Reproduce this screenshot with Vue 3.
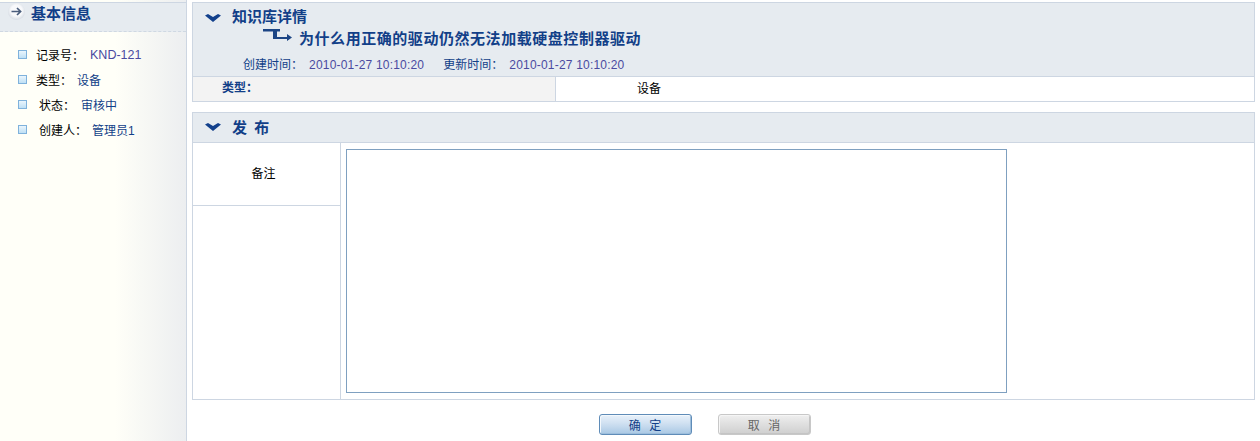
<script setup>
const infos = [
  { label: '记录号：', value: 'KND-121', cls: 'purple', indent: false },
  { label: '类型：', value: '设备', cls: '', indent: false },
  { label: '状态：', value: '审核中', cls: 'v3', indent: true },
  { label: '创建人：', value: '管理员1', cls: 'v4', indent: true },
]
</script>

<template>
  <div class="page">
    <aside class="side">
      <div class="side-head">
        <svg class="arrow-ball" width="17" height="17" viewBox="0 0 17 17">
          <defs>
            <radialGradient id="ball" cx="0.5" cy="0.45" r="0.55">
              <stop offset="0.6" stop-color="#f8f9fb" />
              <stop offset="1" stop-color="#d5dbe3" />
            </radialGradient>
          </defs>
          <circle cx="8.5" cy="8.5" r="8.5" fill="url(#ball)" />
          <path d="M3.5 8.5h9M9 5l3.6 3.5L9 12" fill="none" stroke="#4a5d7c" stroke-width="1.7" />
        </svg>
        <span class="side-title">基本信息</span>
      </div>
      <ul class="info-list">
        <li v-for="i in infos" :key="i.label" class="info">
          <span class="bullet"></span>
          <span class="info-label" :class="{ indent: i.indent }">{{ i.label }}</span>
          <span class="info-value" :class="i.cls">{{ i.value }}</span>
        </li>
      </ul>
    </aside>

    <main class="main">
      <section class="panel">
        <div class="head head-tall">
          <div class="head-line">
            <svg class="chev chev-low" width="16" height="8" viewBox="0 0 16 8"><path d="M0 1.5L3 0l5 3 5-3 3 1.5L8 8z" fill="#12408c" /></svg>
            <span class="head-title">知识库详情</span>
          </div>
          <div class="subject">
            <svg class="subject-icon" width="29" height="13" viewBox="0 0 29 13"><path d="M0 0h17v2.5h-3V8h10V5l5 3.5L24 12v-2H10V2.5H0z" fill="#1c4585" /></svg>
            <span class="subject-text">为什么用正确的驱动仍然无法加载硬盘控制器驱动</span>
          </div>
          <div class="times">
            <span class="t-label">创建时间：</span><span class="t-value">2010-01-27 10:10:20</span>
            <span class="t-label second">更新时间：</span><span class="t-value">2010-01-27 10:10:20</span>
          </div>
        </div>
        <div class="type-row">
          <div class="type-label">类型：</div>
          <div class="type-value">设备</div>
        </div>
      </section>

      <section class="panel publish">
        <div class="head head-short">
          <svg class="chev" width="16" height="8" viewBox="0 0 16 8"><path d="M0 1.5L3 0l5 3 5-3 3 1.5L8 8z" fill="#12408c" /></svg>
          <span class="head-title spaced">发 布</span>
        </div>
        <div class="form">
          <div class="form-left"><div class="note-label">备注</div></div>
          <div class="form-right"><textarea class="note"></textarea></div>
        </div>
      </section>

      <div class="actions">
        <button class="btn ok">确 定</button>
        <button class="btn cancel">取 消</button>
      </div>
    </main>
  </div>
</template>

<style>
html, body { margin: 0; background: #fff; }
</style>

<style scoped>
.page {
  display: flex;
  width: 1260px;
  height: 441px;
  overflow: hidden;
  font: 12px "Liberation Sans", "Noto Sans CJK SC", sans-serif;
  color: #000;
  box-sizing: border-box;
}
.side {
  width: 187px;
  flex: none;
  box-sizing: border-box;
  border-right: 1px solid #cdd6e2;
  background: linear-gradient(90deg, #fffff8 0, #fffff8 62%, #eceef0 100%);
  padding-top: 2px;
}
.side-head {
  height: 30px;
  box-sizing: border-box;
  background: #e6ebf0;
  border-top: 1px solid #cdd6e2;
  border-bottom: 1px dashed #cfd8e2;
  display: flex;
  align-items: flex-start;
  padding: 0 0 0 8px;
}
.arrow-ball { flex: none; }
.side-title {
  margin: 1px 0 0 6px;
  font-size: 15px;
  font-weight: 700;
  line-height: 20px;
  color: #123f88;
}
.info-list {
  list-style: none;
  margin: 0;
  padding: 10px 0 0 18px;
}
.info {
  display: flex;
  align-items: center;
  height: 25px;
}
.bullet {
  width: 7px;
  height: 7px;
  flex: none;
  border: 1px solid #7fb2dc;
  background: linear-gradient(#eaf5fc, #bfe0f5);
}
.info-label { margin-left: 9px; }
.info-label.indent { margin-left: 12px; }
.info-value { margin-left: 5px; color: #123f88; }
.info-value.purple { color: #4a4aa0; margin-left: 6px; font-size: 12.5px; }
.info-value.v3 { margin-left: 6px; }
.info-value.v4 { margin-left: 5px; }

.main {
  width: 1063px;
  margin-left: 5px;
  padding-top: 2px;
  flex: none;
}
.panel {
  border: 1px solid #cdd6e2;
  box-sizing: border-box;
}
.head {
  background: #e6ebf0;
  border-bottom: 1px solid #cdd6e2;
  box-sizing: border-box;
}
.head-tall { height: 74px; padding: 0 0 0 12px; }
.head-line {
  display: flex;
  align-items: center;
  height: 25px;
}
.chev { flex: none; }
.chev-low { margin-top: 5px; }
.head-title {
  margin-left: 11px;
  font-size: 15px;
  font-weight: 700;
  color: #123f88;
}
.head-title.spaced { letter-spacing: 1px; word-spacing: 1px; }
.subject {
  display: flex;
  align-items: center;
  height: 18px;
  padding-left: 58px;
}
.subject-icon { flex: none; margin-top: -3px; }
.subject-text {
  margin-left: 7px;
  font-size: 15px;
  letter-spacing: 0.55px;
  font-weight: 700;
  color: #123f88;
  white-space: nowrap;
}
.times {
  margin-top: 9px;
  padding-left: 38px;
  height: 20px;
  line-height: 20px;
  white-space: nowrap;
}
.t-label { color: #123f88; }
.t-label.second { margin-left: 19px; }
.t-value { color: #4a4aa0; margin-left: 6px; letter-spacing: 0.2px; }
.type-row {
  display: flex;
  height: 24px;
  line-height: 23px;
}
.type-label {
  width: 363px;
  box-sizing: border-box;
  background: #f3f3f3;
  padding-left: 29px;
  font-weight: 700;
  color: #123f88;
  border-right: 1px solid #cdd6e2;
}
.type-value { padding: 1px 0 0 81px; }

.publish { margin-top: 10px; }
.head-short {
  height: 30px;
  display: flex;
  align-items: center;
  padding: 0 0 2px 12px;
}
.form { display: flex; height: 256px; }
.form-left {
  width: 148px;
  flex: none;
  box-sizing: border-box;
  border-right: 1px solid #cdd6e2;
}
.note-label {
  height: 63px;
  box-sizing: border-box;
  border-bottom: 1px solid #cdd6e2;
  text-align: center;
  line-height: 62px;
  padding-right: 6px;
}
.form-right { padding: 6px 0 0 5px; }
.note {
  display: block;
  width: 661px;
  height: 244px;
  margin: 0;
  padding: 0;
  box-sizing: border-box;
  border: 1px solid #7fa0c0;
  background: #fff;
  resize: none;
  outline: none;
}
.actions {
  display: flex;
  padding: 14px 0 0 407px;
  gap: 26px;
}
.btn {
  width: 93px;
  height: 21px;
  padding: 0;
  border-radius: 3px;
  font: 12px "Liberation Sans", "Noto Sans CJK SC", sans-serif;
  letter-spacing: 1px;
  word-spacing: 3px;
  box-sizing: border-box;
}
.ok {
  border: 1px solid #5f8cb8;
  background: linear-gradient(#e8f1fa 0, #cfe0f1 45%, #a9c8e4 100%);
  box-shadow: inset 1px 1px 0 #f3f8fc, inset -1px -1px 0 #9dbedc;
  color: #123f88;
}
.cancel {
  border: 1px solid #c8c8c8;
  background: linear-gradient(#efefef 0, #e0e0e0 45%, #cfcfcf 100%);
  box-shadow: inset 1px 1px 0 #f5f5f5, inset -1px -1px 0 #c4c4c4;
  color: #666;
}
</style>
